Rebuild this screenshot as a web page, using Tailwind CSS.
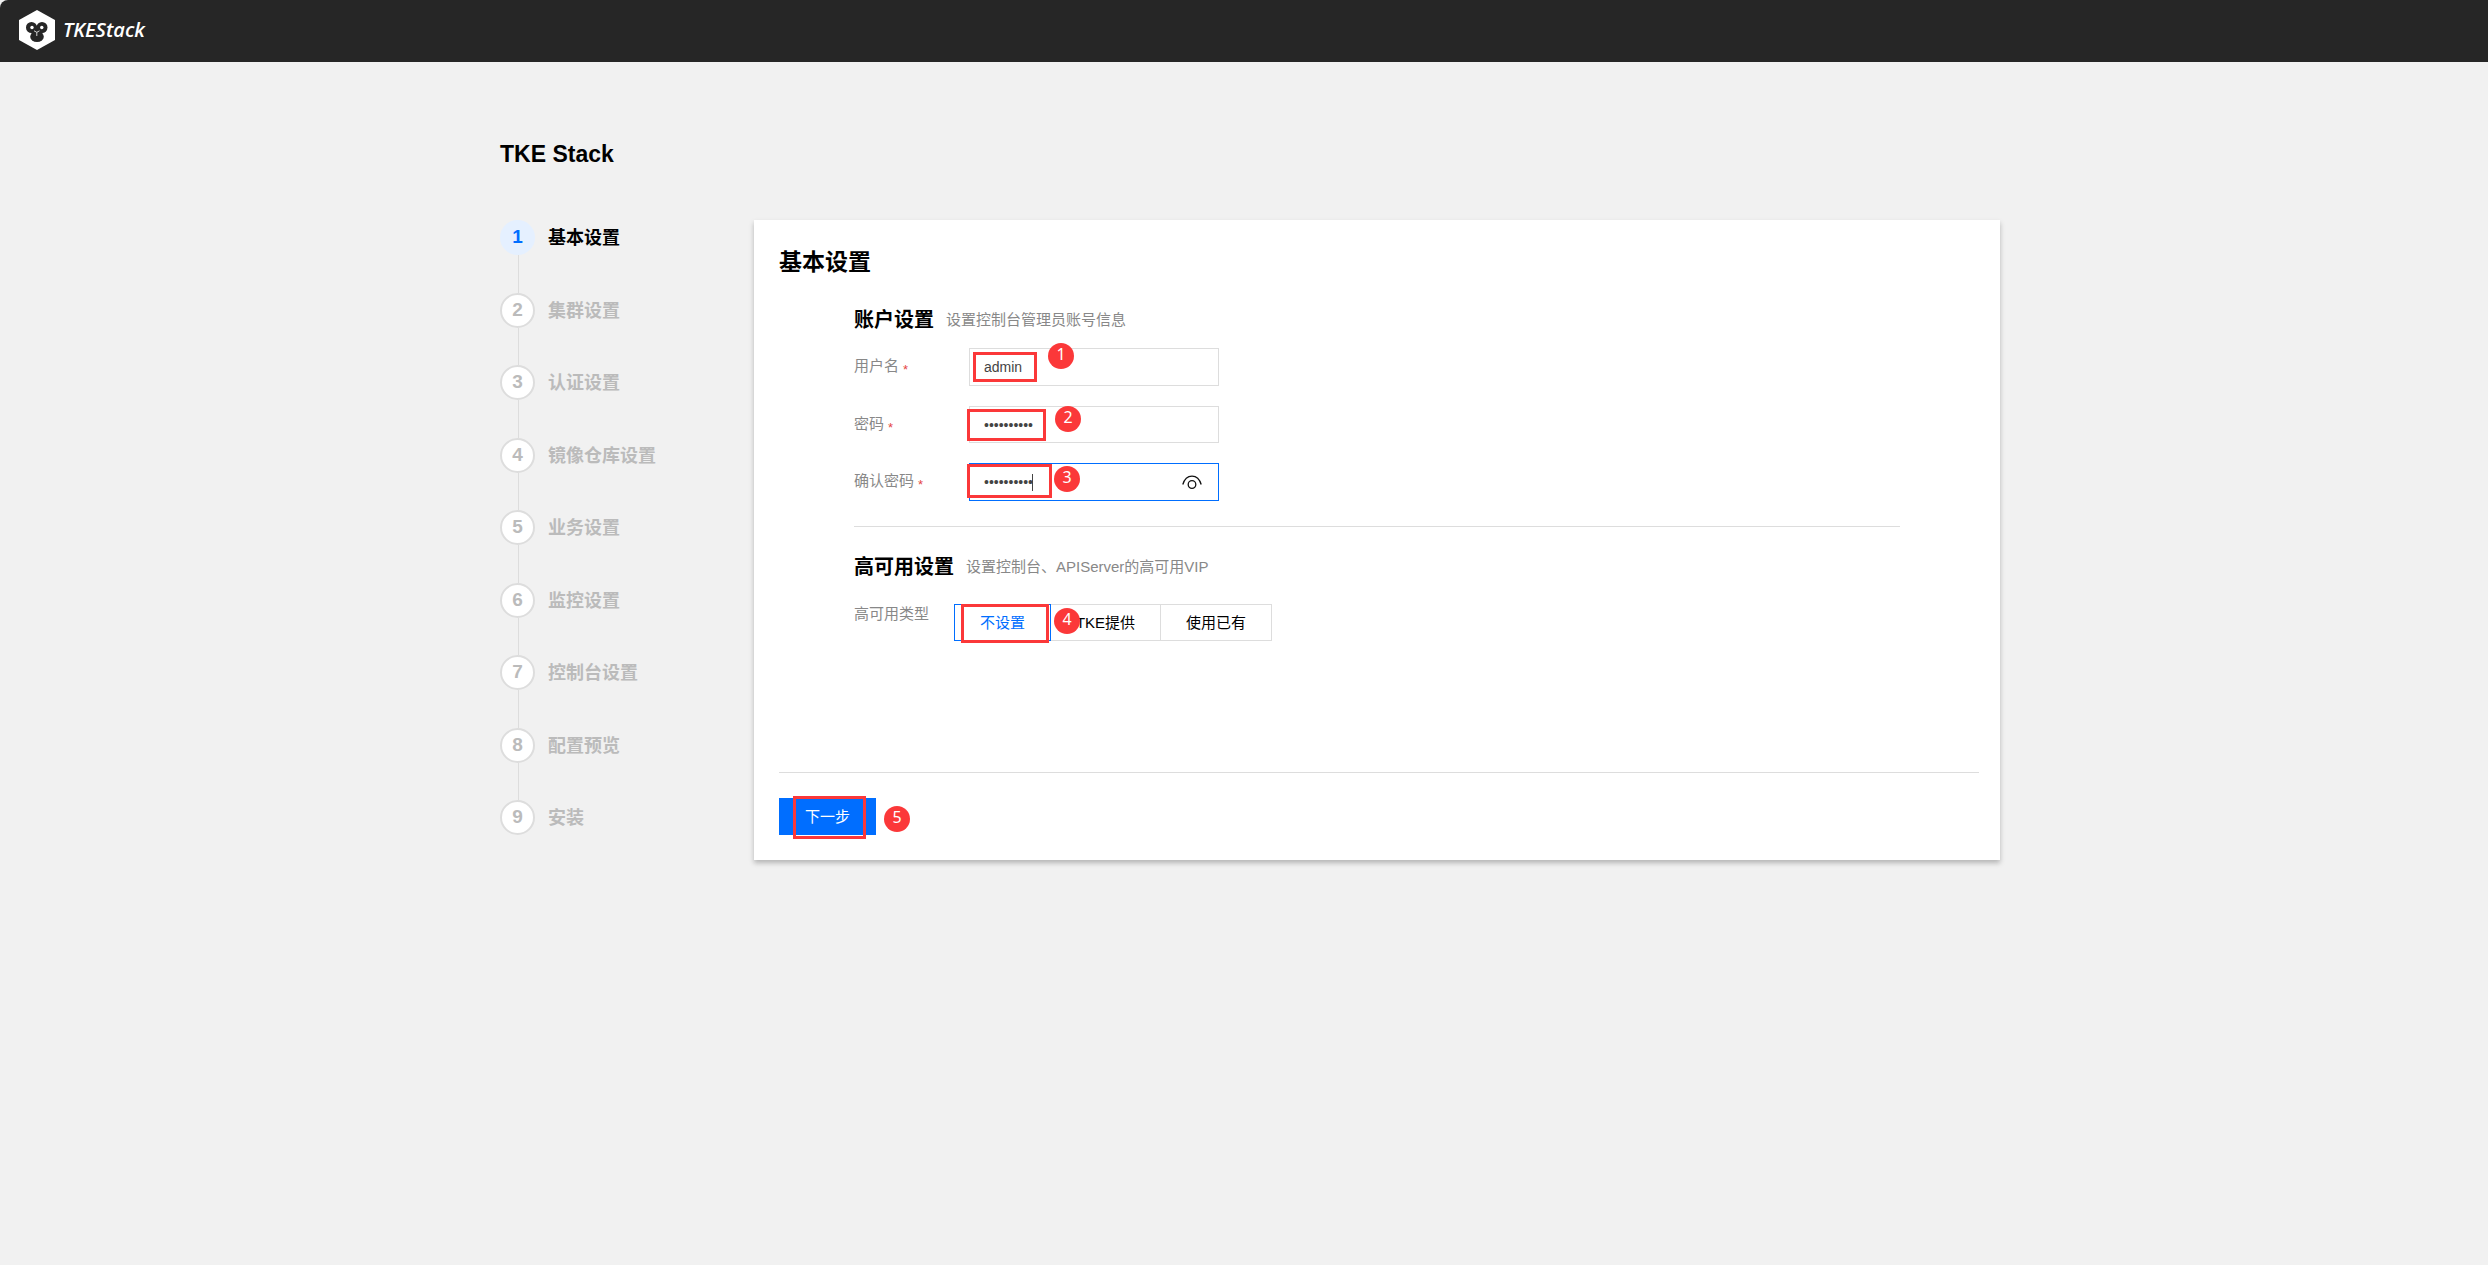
<!DOCTYPE html>
<html lang="zh-CN">
<head>
<meta charset="utf-8">
<meta name="viewport" content="width=device-width, initial-scale=1">
<title>TKE Stack</title>
<script src="https://cdn.jsdelivr.net/npm/@tailwindcss/browser@4"></script>
</head>
<body class="min-h-screen bg-[#f1f1f1] font-['Liberation_Sans','Noto_Sans_CJK_SC',sans-serif] text-[15px] leading-5 text-[#888]">
<header class="flex h-[62px] items-center gap-2 rounded-tl-lg bg-[#262626] pb-0.5 pl-[19px]">
  <svg class="h-10 w-9" viewBox="0 0 36 40" aria-hidden="true">
    <path fill="#fff" d="M18 0 36 10V30L18 40 0 30V10Z"/>
    <g fill="#262626"><circle cx="12.500" cy="17.500" r="5.500"/><circle cx="23" cy="17.500" r="5.500"/><ellipse cx="18" cy="26.800" rx="6.800" ry="5.200"/><path d="M12.500 19 18 15.500 23 19 23.500 24 18 28 12.500 24Z"/></g>
    <g fill="#fff"><circle cx="13" cy="17.500" r="1.700"/><circle cx="22.800" cy="17.500" r="1.700"/></g>
    <path d="M15 20.800 17.800 22.300 20.500 20.800M17.800 22.300V26" fill="none" stroke="#fff" stroke-width=".8"/>
  </svg>
  <span class="font-['Open_Sans',sans-serif] text-xl font-semibold text-white italic">TKEStack</span>
</header>

<main class="pl-3">
  <div class="mx-auto max-w-[1500px] pt-20">
    <h1 class="text-[23px] leading-6 font-bold text-black">TKE Stack</h1>
    <div class="mt-[54px] flex items-start">
      <ol class="flex h-[615px] w-[254px] shrink-0 flex-col text-lg leading-[37px] font-bold text-[#bbb]">
        <li class="flex flex-1 gap-[13px] text-black"><div class="flex w-[35px] flex-col"><span class="size-[35px] rounded-full bg-[#e5f0ff] text-center text-[19px] leading-[34px] text-[#006eff]">1</span><i class="ml-[18px] w-px flex-1 bg-[#ddd]"></i></div><span>基本设置</span></li>
        <li class="flex flex-1 gap-[13px]"><div class="flex w-[35px] flex-col"><span class="size-[35px] rounded-full border-2 border-[#ddd] bg-white text-center text-[19px] leading-[30px]">2</span><i class="ml-[18px] w-px flex-1 bg-[#ddd]"></i></div><span>集群设置</span></li>
        <li class="flex flex-1 gap-[13px]"><div class="flex w-[35px] flex-col"><span class="size-[35px] rounded-full border-2 border-[#ddd] bg-white text-center text-[19px] leading-[30px]">3</span><i class="ml-[18px] w-px flex-1 bg-[#ddd]"></i></div><span>认证设置</span></li>
        <li class="flex flex-1 gap-[13px]"><div class="flex w-[35px] flex-col"><span class="size-[35px] rounded-full border-2 border-[#ddd] bg-white text-center text-[19px] leading-[30px]">4</span><i class="ml-[18px] w-px flex-1 bg-[#ddd]"></i></div><span>镜像仓库设置</span></li>
        <li class="flex flex-1 gap-[13px]"><div class="flex w-[35px] flex-col"><span class="size-[35px] rounded-full border-2 border-[#ddd] bg-white text-center text-[19px] leading-[30px]">5</span><i class="ml-[18px] w-px flex-1 bg-[#ddd]"></i></div><span>业务设置</span></li>
        <li class="flex flex-1 gap-[13px]"><div class="flex w-[35px] flex-col"><span class="size-[35px] rounded-full border-2 border-[#ddd] bg-white text-center text-[19px] leading-[30px]">6</span><i class="ml-[18px] w-px flex-1 bg-[#ddd]"></i></div><span>监控设置</span></li>
        <li class="flex flex-1 gap-[13px]"><div class="flex w-[35px] flex-col"><span class="size-[35px] rounded-full border-2 border-[#ddd] bg-white text-center text-[19px] leading-[30px]">7</span><i class="ml-[18px] w-px flex-1 bg-[#ddd]"></i></div><span>控制台设置</span></li>
        <li class="flex flex-1 gap-[13px]"><div class="flex w-[35px] flex-col"><span class="size-[35px] rounded-full border-2 border-[#ddd] bg-white text-center text-[19px] leading-[30px]">8</span><i class="ml-[18px] w-px flex-1 bg-[#ddd]"></i></div><span>配置预览</span></li>
        <li class="flex h-[35px] gap-[13px]"><span class="size-[35px] rounded-full border-2 border-[#ddd] bg-white text-center text-[19px] leading-[30px]">9</span><span>安装</span></li>
      </ol>

      <form class="relative flex-1 bg-white pt-7 pr-[21px] pb-[25px] pl-[25px] shadow-[0_3px_5px_rgba(0,0,0,0.25)]">
        <h2 class="text-[23px] leading-7 font-bold text-black">基本设置</h2>
        <div class="mt-8 mr-[79px] ml-[75px]">
          <section class="border-b border-[#ddd] pb-[25px]">
            <div class="flex items-center gap-3">
              <h3 class="text-xl leading-6 font-bold text-black">账户设置</h3>
              <p>设置控制台管理员账号信息</p>
            </div>
            <div class="mt-4 flex flex-col gap-5">
              <div class="flex h-[38px]">
                <label for="user" class="w-[115px] leading-9">用户名<span class="ml-1 align-[-3px] text-[13px] leading-none text-[#e54545]">*</span></label>
                <input id="user" type="text" value="admin" class="h-full w-[250px] border border-[#ddd] px-3.5 text-sm text-[#444] outline-none">
              </div>
              <div class="flex h-[37px]">
                <label for="pass" class="w-[115px] leading-9">密码<span class="ml-1 align-[-3px] text-[13px] leading-none text-[#e54545]">*</span></label>
                <input id="pass" type="password" value="admin12345" class="h-full w-[250px] border border-[#ddd] px-3.5 text-sm text-[#444] outline-none">
              </div>
              <div class="flex h-[38px]">
                <label for="confirm" class="w-[115px] leading-9">确认密码<span class="ml-1 align-[-3px] text-[13px] leading-none text-[#e54545]">*</span></label>
                <div class="relative h-full w-[250px]">
                  <input id="confirm" type="password" value="admin12345" class="h-full w-full border border-[#006eff] px-3.5 text-sm text-[#444] outline-none">
                  <i class="absolute top-[11px] left-[63px] h-[17px] w-px bg-[#444]"></i>
                  <button type="button" aria-label="显示密码" class="absolute top-[11px] right-[17px]">
                    <svg class="h-[18px] w-5" viewBox="0 0 20 18" fill="none" stroke="#111" stroke-width="1.300"><path d="M.8 10.500C4-.8 16-.8 19.200 10.500"/><circle cx="10" cy="10.500" r="3.800"/></svg>
                  </button>
                </div>
              </div>
            </div>
          </section>
          <section class="pt-7">
            <div class="flex items-center gap-3">
              <h3 class="text-xl leading-6 font-bold text-black">高可用设置</h3>
              <p>设置控制台、APIServer的高可用VIP</p>
            </div>
            <div class="mt-[25px] flex">
              <span class="w-[100px]">高可用类型</span>
              <div class="flex h-[37px] text-black">
                <button type="button" class="w-[97px] border border-[#006eff] text-[#006eff]">不设置</button>
                <button type="button" class="w-[110px] border-y border-r border-[#ddd]">TKE提供</button>
                <button type="button" class="w-[111px] border-y border-r border-[#ddd]">使用已有</button>
              </div>
            </div>
          </section>
        </div>
        <div class="mt-[131px] border-t border-[#ddd] pt-[25px]">
          <button type="button" class="block h-[37px] w-[97px] bg-[#006eff] text-white">下一步</button>
        </div>

        <!-- numbered callouts -->
        <div class="pointer-events-none absolute inset-0 font-['Noto_Sans',sans-serif] text-base leading-[23px] text-white">
          <i class="absolute top-[132px] left-[219px] h-[30px] w-16 border-3 border-[#fb3839]"></i>
          <i class="absolute top-[189px] left-[213px] h-8 w-[79px] border-3 border-[#fb3839]"></i>
          <i class="absolute top-[244px] left-[213px] h-[34px] w-[85px] border-3 border-[#fb3839]"></i>
          <i class="absolute top-[384px] left-[207px] h-[39px] w-[88px] border-3 border-[#fb3839]"></i>
          <i class="absolute top-[576px] left-[39px] h-[43px] w-[73px] border-3 border-[#fb3839]"></i>
          <span class="absolute top-[123px] left-[294px] size-[26px] rounded-full bg-[#fb3839] text-center">1</span>
          <span class="absolute top-[186px] left-[301px] size-[26px] rounded-full bg-[#fb3839] text-center">2</span>
          <span class="absolute top-[246px] left-[300px] size-[26px] rounded-full bg-[#fb3839] text-center">3</span>
          <span class="absolute top-[388px] left-[300px] size-[26px] rounded-full bg-[#fb3839] text-center">4</span>
          <span class="absolute top-[586px] left-[130px] size-[26px] rounded-full bg-[#fb3839] text-center">5</span>
        </div>
      </form>
    </div>
  </div>
</main>
</body>
</html>
